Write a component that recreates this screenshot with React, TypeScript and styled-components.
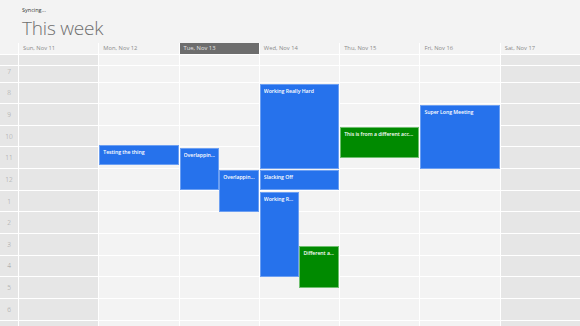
import React from 'react';
import styled, { createGlobalStyle } from 'styled-components';

const HOUR = 21.65;
const FIRST_HOUR = 7;
const HOUR_LABELS = [7, 8, 9, 10, 11, 12, 1, 2, 3, 4, 5, 6, 7];

interface Day {
  label: string;
  weekend?: boolean;
  today?: boolean;
}

interface CalEvent {
  day: number;
  title: string;
  start: number;
  end: number;
  lane?: number;
  lanes?: number;
  color?: 'blue' | 'green';
}

const DAYS: Day[] = [
  { label: 'Sun, Nov 11', weekend: true },
  { label: 'Mon, Nov 12' },
  { label: 'Tue, Nov 13', today: true },
  { label: 'Wed, Nov 14' },
  { label: 'Thu, Nov 15' },
  { label: 'Fri, Nov 16' },
  { label: 'Sat, Nov 17', weekend: true },
];

const EVENTS: CalEvent[] = [
  { day: 1, title: 'Testing the thing', start: 10.83, end: 11.85 },
  { day: 2, title: 'Overlappin...', start: 11, end: 13, lane: 0, lanes: 2 },
  { day: 2, title: 'Overlappin...', start: 12, end: 14, lane: 1, lanes: 2 },
  { day: 3, title: 'Working Really Hard', start: 8, end: 12 },
  { day: 3, title: 'Slacking Off', start: 12, end: 13 },
  { day: 3, title: 'Working R...', start: 13, end: 17, lane: 0, lanes: 2 },
  { day: 3, title: 'Different a...', start: 15.5, end: 17.5, lane: 1, lanes: 2, color: 'green' },
  { day: 4, title: 'This is from a different acc...', start: 10, end: 11.5, color: 'green' },
  { day: 5, title: 'Super Long Meeting', start: 9, end: 12 },
];

const App: React.FC = () => {
  return (
    <Page>
      <GlobalStyle />
      <TopBar>
        <Status>Syncing...</Status>
        <Title>This week</Title>
      </TopBar>
      <Calendar>
        <Row>
          <Corner />
          {DAYS.map((d) => (
            <DayHeader key={d.label} $today={d.today}>
              {d.label}
            </DayHeader>
          ))}
        </Row>
        <AllDayRow>
          <AllDayCell $weekend />
          {DAYS.map((d) => (
            <AllDayCell key={d.label} $weekend={d.weekend} />
          ))}
        </AllDayRow>
        <Body>
          <HourGrid>
            <TimeColumn>
              {HOUR_LABELS.map((h, i) => (
                <TimeCell key={i}>{h}</TimeCell>
              ))}
            </TimeColumn>
            {DAYS.map((d, di) => (
              <DayColumn key={d.label} $weekend={d.weekend}>
                {HOUR_LABELS.map((_, i) => (
                  <HourCell key={i} />
                ))}
                {EVENTS.filter((e) => e.day === di).map((e, i) => {
                  const lanes = e.lanes ?? 1;
                  const lane = e.lane ?? 0;
                  return (
                    <Event
                      key={i}
                      $color={e.color ?? 'blue'}
                      style={{
                        top: (e.start - FIRST_HOUR) * HOUR + 1,
                        height: (e.end - e.start) * HOUR - 1.5,
                        left: `${(lane / lanes) * 100}%`,
                        width: `${100 / lanes}%`,
                      }}
                    >
                      <EventTitle>{e.title}</EventTitle>
                    </Event>
                  );
                })}
              </DayColumn>
            ))}
          </HourGrid>
        </Body>
      </Calendar>
    </Page>
  );
};

export default App;

const GlobalStyle = createGlobalStyle`
  html, body {
    margin: 0;
    padding: 0;
    background: #f3f3f3;
  }
  body {
    font-family: 'Open Sans', 'Noto Sans', sans-serif;
  }
  * {
    box-sizing: border-box;
  }
`;

const Page = styled.div`
  width: 100%;
  height: 100vh;
  display: flex;
  flex-direction: column;
  overflow: hidden;
  background: #f3f3f3;
`;

const TopBar = styled.div`
  height: 43px;
  padding: 6px 0 0 22px;
  flex-shrink: 0;
`;

const Status = styled.div`
  font-size: 5.5px;
  line-height: 8px;
  color: #333;
`;

const Title = styled.h1`
  margin: 2px 0 0;
  font-size: 19px;
  font-weight: 300;
  line-height: 24px;
  color: #6f6f6f;
  letter-spacing: -0.2px;
`;

const Calendar = styled.div`
  flex: 1;
  min-height: 0;
  display: grid;
  grid-template-rows: 10.5px 10px 1fr;
  row-gap: 1px;
  background: #ffffff;
`;

const Row = styled.div`
  display: grid;
  grid-template-columns: 18px repeat(7, 1fr);
  column-gap: 1px;
  background: #ffffff;
`;

const Corner = styled.div`
  background: #f3f3f3;
`;

const DayHeader = styled.div<{ $today?: boolean }>`
  background: ${(p) => (p.$today ? '#6d6d6d' : '#f3f3f3')};
  color: ${(p) => (p.$today ? '#e6e6e6' : '#8a8a8a')};
  font-size: 5.8px;
  line-height: 10.5px;
  padding-left: 4px;
  white-space: nowrap;
  overflow: hidden;
`;

const AllDayRow = styled(Row)``;

const AllDayCell = styled.div<{ $weekend?: boolean }>`
  background: ${(p) => (p.$weekend ? '#e6e6e6' : '#f3f3f3')};
`;

const Body = styled.div`
  min-height: 0;
  overflow: hidden;
`;

const HourGrid = styled(Row)`
  margin-top: -4.65px;
  align-items: start;
`;

const TimeColumn = styled.div`
  background: #e6e6e6;
`;

const TimeCell = styled.div`
  height: ${HOUR}px;
  border-bottom: 1px solid #ffffff;
  display: flex;
  align-items: center;
  justify-content: center;
  font-size: 6.5px;
  font-weight: 300;
  color: #9a9a9a;
`;

const DayColumn = styled.div<{ $weekend?: boolean }>`
  position: relative;
  background: ${(p) => (p.$weekend ? '#e6e6e6' : '#f3f3f3')};
`;

const HourCell = styled.div`
  height: ${HOUR}px;
  border-bottom: 1px solid #ffffff;
`;

const Event = styled.div<{ $color: 'blue' | 'green' }>`
  position: absolute;
  background: ${(p) => (p.$color === 'green' ? '#008a00' : '#2672ec')};
  border: 1px solid
    ${(p) => (p.$color === 'green' ? '#6fbf6f' : '#6c9ff2')};
  padding: 3px 2px 2px 3px;
  overflow: hidden;
`;

const EventTitle = styled.div`
  color: #ffffff;
  font-size: 5.2px;
  font-weight: 600;
  line-height: 7px;
  letter-spacing: -0.05px;
  white-space: nowrap;
  overflow: hidden;
  text-overflow: ellipsis;
`;
